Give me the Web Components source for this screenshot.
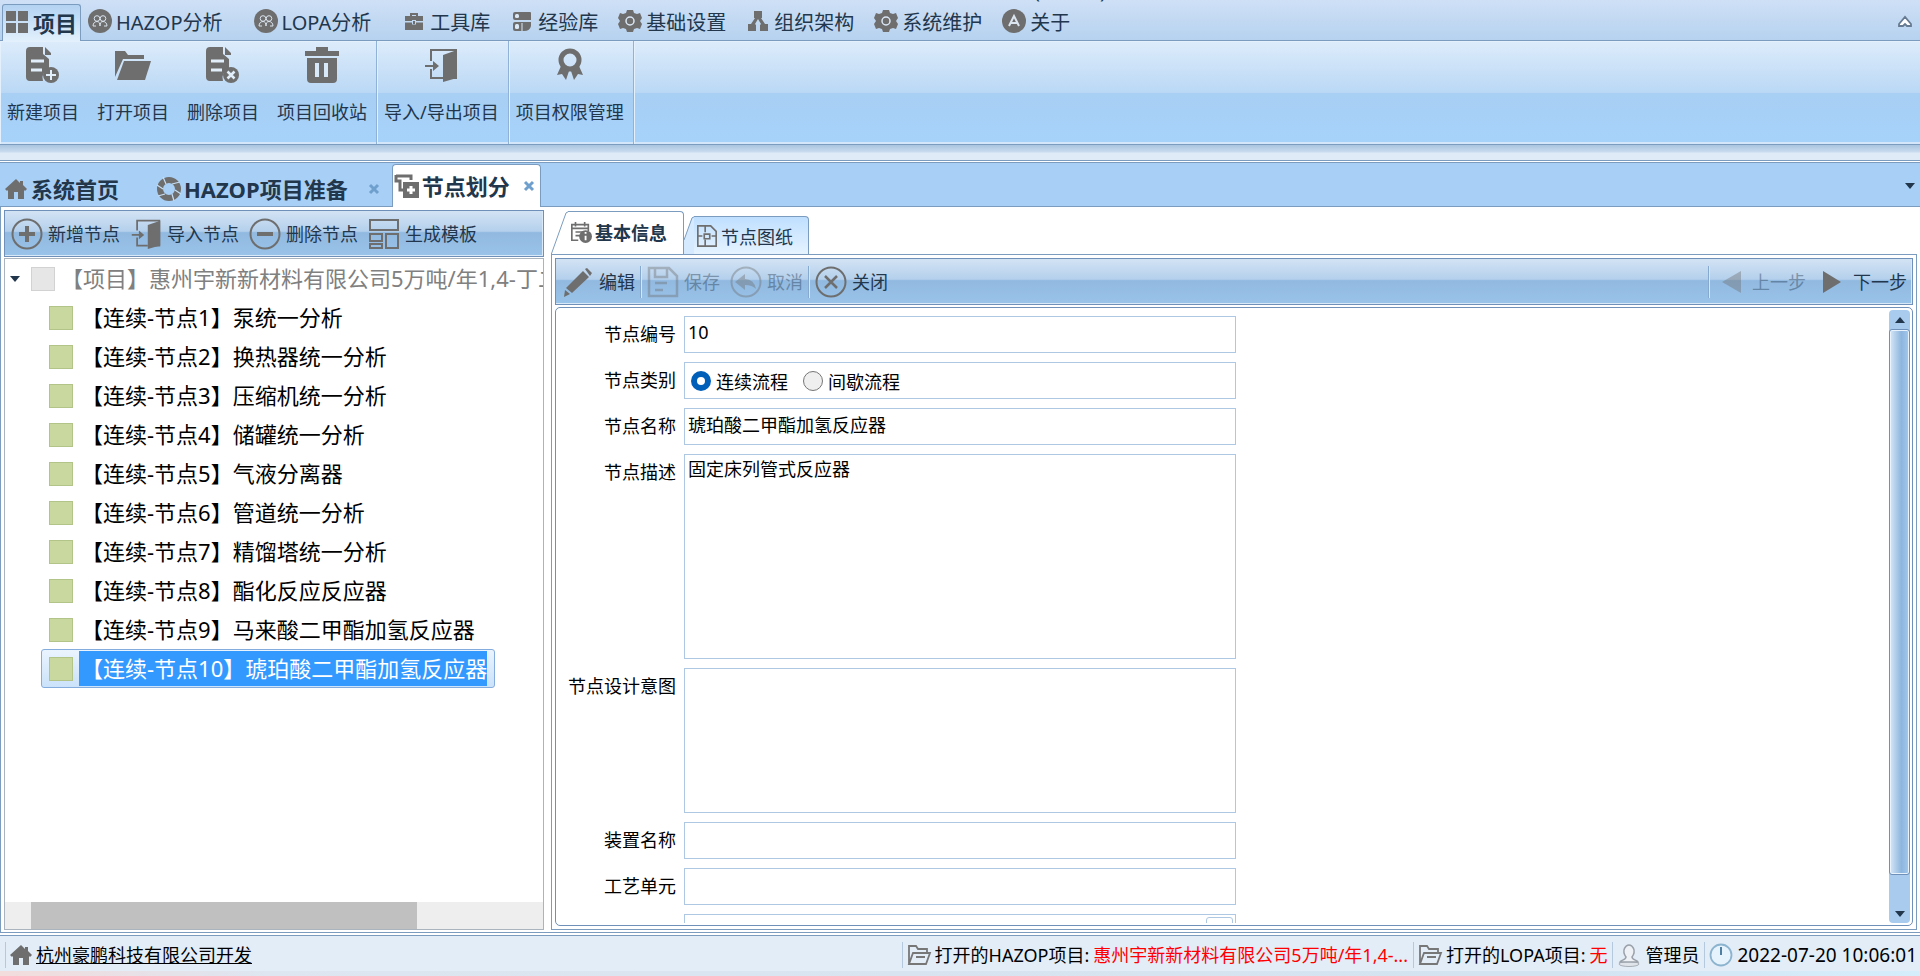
<!DOCTYPE html>
<html lang="zh-CN">
<head>
<meta charset="utf-8">
<title>节点划分</title>
<style>
  html, body {
    height: 100%;
    margin: 0;
  }
  body {
    --line: #7b9cbf;
    --ink: #22364c;
    --icon: #6e6e6e;
    --bar: linear-gradient(#d3e3f4 0, #b4d0ec 45%, #92bae1 48%, #9ac3ea 100%);
    font-family: "Noto Sans", "Noto Sans CJK SC", sans-serif;
    font-size: 18px;
    color: #000;
    background: #fff;
    overflow: hidden;
  }
</style>
</head>
<body>
<hazop-app></hazop-app>

<script>
const ICONS = {
  grid: '<path d="M1 1h10v10H1zM13 1h10v10H13zM1 13h10v10H1zM13 13h10v10H13z" fill="currentColor"/>',
  people: '<circle cx="12" cy="12" r="12" fill="currentColor"/><g fill="none" stroke="#dbe5ef" stroke-width="1"><circle cx="9" cy="9.500" r="2.800"/><circle cx="15" cy="9.500" r="2.800"/><path d="M5 17c0-3 2-4.500 4-4.500s3 1.500 3 4.500M12 17c0-3 1-4.500 3-4.500s4 1.500 4 4.500M5 17h3M16 17h3"/></g>',
  toolbox: '<path d="M3 7h5V4h8v3h5v5h-7v-1h-4v1H3zM10 7h4V6h-4zM3 13.500h7v2h4v-2h7V21H3z" fill="currentColor"/><path d="M11 12h2v3h-2z" fill="currentColor"/>',
  library: '<path d="M5 3h15a1 1 0 0 1 1 1v7H5a2 2 0 0 1-2-2V5a2 2 0 0 1 2-2zM5 13h16v4q-1 5-7 5H5a2 2 0 0 1-2-2v-5a2 2 0 0 1 2-2z" fill="currentColor"/><rect x="5" y="5" width="4" height="4" rx="1.500" fill="#dbe8f6"/><rect x="5" y="15" width="4" height="5" rx="1.500" fill="#dbe8f6"/><path d="M12 14v8" stroke="#dbe8f6"/>',
  gear: '<path d="M9 1h6l1 3 3 1 3-1 2 5-2 3 2 3-2 5-3-1-3 1-1 3H9l-1-3-3-1-3 1-2-5 2-3-2-3 2-5 3 1 3-1z" fill="currentColor"/><circle cx="12" cy="12" r="4" fill="none" stroke="#dbe8f6" stroke-width="1.500"/>',
  org: '<path d="M8 2h8v7h-1l4 6h3v7h-8v-6l1-1-3-5-3 5 1 1v6H2v-7h3l4-6H8z" fill="currentColor"/>',
  about: '<circle cx="12" cy="12" r="12" fill="currentColor"/><path d="M7 17l5-10 5 10M9 14h6" fill="none" stroke="#dbe5ef" stroke-width="2"/>',
  docAdd: '<path d="M5 0h13v7l6 5v10a9 9 0 0 0-6 12H5a4 4 0 0 1-4-4V4a4 4 0 0 1 4-4zM20 0l6 6v2h-6z" fill="currentColor"/><path d="M6 14h13M6 23h11" stroke="#e2effb" stroke-width="3"/><circle cx="26" cy="28" r="8" fill="currentColor"/><path d="M26 23v10M21 28h10" stroke="#e2effb" stroke-width="2"/>',
  docDel: '<path d="M5 0h13v7l6 5v10a9 9 0 0 0-6 12H5a4 4 0 0 1-4-4V4a4 4 0 0 1 4-4zM20 0l6 6v2h-6z" fill="currentColor"/><path d="M6 14h13M6 23h11" stroke="#e2effb" stroke-width="3"/><circle cx="26" cy="28" r="8" fill="currentColor"/><path d="M22.500 24.500l7 7M29.500 24.500l-7 7" stroke="#e2effb" stroke-width="2.500"/>',
  folder: '<path d="M0 4h10l3 4h16v4H8L0 30z" fill="currentColor"/><path d="M9 14h27l-6 19H2z" fill="currentColor"/>',
  trash: '<path d="M12 0h12v4h11v5H1V4h11zM3 11h30v21a4 4 0 0 1-4 4H7a4 4 0 0 1-4-4z" fill="currentColor"/><path d="M13 16v14M22 16v14" stroke="#d8e9f9" stroke-width="4"/>',
  door: '<path d="M8 14V3h25v28h-8M8 22v9h12" fill="none" stroke="currentColor" stroke-width="2"/><path d="M20 8l14-5v28l-14 4zM10 14l6 5-6 5v-4H2v-2h8z" fill="currentColor"/>',
  medal: '<circle cx="18" cy="13" r="9" fill="none" stroke="currentColor" stroke-width="5"/><path d="M9 19L5 28l5-1 4 6 3-9zM27 19l4 9-5-1-4 6-3-9z" fill="currentColor"/>',
  home: '<path d="M12 2L1 12l2 2 1-1v9h6v-7h4v7h6v-9l1 1 2-2-4-4V4h-3v2z" fill="currentColor"/>',
  shutter: '<circle cx="12" cy="12" r="9" fill="none" stroke="currentColor" stroke-width="6"/><path d="M6 0l3 7M23 5l-8 2M24 17l-6-4M17 24l-2-7M1 19l7-2M0 8l6 4" stroke="#c7dff5" stroke-width="1.200"/>',
  split: '<path d="M1 1v6h4v9h4M1 2h15v4" fill="none" stroke="currentColor" stroke-width="3"/><path d="M8 8h16v16H8z" fill="currentColor"/><path d="M16 12v8M12 16h8" stroke="#fff" stroke-width="3"/>',
  plus: '<circle cx="16" cy="16" r="14.500" fill="none" stroke="currentColor" stroke-width="2"/><path d="M16 8v16M8 16h16" stroke="currentColor" stroke-width="4"/>',
  minus: '<circle cx="16" cy="16" r="14.500" fill="none" stroke="currentColor" stroke-width="2"/><path d="M8 16h16" stroke="currentColor" stroke-width="4"/>',
  template: '<path d="M2 2h28v10H2zM2 16h12v7H2zM18 16h12v14H18zM2 26h12v4H2z" fill="none" stroke="currentColor" stroke-width="2"/>',
  info: '<path d="M9 21H2V4h18v7M2 8h18M6 1v5M16 1v5M6 12h9M6 16h5" fill="none" stroke="currentColor" stroke-width="1.800"/><circle cx="17" cy="17" r="7" fill="currentColor"/><path d="M17 16v5M17 12v2" stroke="#fff" stroke-width="2"/>',
  drawing: '<path d="M2 1h14l6 6v16H2zM10 1v7M10 16v7M2 12h5M17 12h5M9 10h6v5H9z" fill="none" stroke="currentColor" stroke-width="1.800"/>',
  pencil: '<path d="M23 3l2-1 5 5-2 3zM21 5l6 6L10 27l-6-5zM3 24l5 4-6 3z" fill="currentColor"/>',
  save: '<path d="M2 2h20l8 8v20H2zM8 2v9h12V2M8 17h12M8 24h8" fill="none" stroke="currentColor" stroke-width="2.500"/>',
  undo: '<circle cx="16" cy="16" r="14.500" fill="none" stroke="currentColor" stroke-width="2"/><path d="M15 8v5q9 0 11 10-4-4-11-4v5l-10-8z" fill="currentColor"/>',
  cross: '<circle cx="16" cy="16" r="14.500" fill="none" stroke="currentColor" stroke-width="2"/><path d="M10 10l12 12M22 10L10 22" stroke="currentColor" stroke-width="2.500"/>',
  prev: '<path d="M26 5v22L7 16z" fill="currentColor"/>',
  next: '<path d="M7 5v22l18-11z" fill="currentColor"/>',
  close: '<path d="M2 2l8 8M10 2l-8 8" stroke="#6f9fcc" stroke-width="3"/>',
  down: '<path d="M1 3h10L6 9z" fill="#22364c"/>',
  up: '<path d="M1 9h10L6 3z" fill="#22364c"/>',
  collapse: '<path d="M1 9l6-7 6 7v2H9L7 9l-2 2H1z" fill="#fff" stroke="#667b92" stroke-width="1.800"/>',
  folderOpen: '<path d="M2 21V3h7l2 3h9v4M2 21l4-11h17l-4 11zM9 14h9" fill="none" stroke="#777" stroke-width="1.800"/>',
  user: '<ellipse cx="12" cy="21" rx="10" ry="2.500" fill="#dfe4ea" stroke="#a6adb5"/><path d="M9 14c-5-7 0-12 3-12s8 5 3 12c0 3 5 3 6 5H3c1-2 6-2 6-5z" fill="#eef2f6" stroke="#9aa1a9" stroke-width="1.500"/>',
  clock: '<circle cx="12" cy="12" r="10.500" fill="#e6f3fc" stroke="#8cb4cf" stroke-width="1.800"/><path d="M12 4v8" stroke="#4f7fa3" stroke-width="2"/>'
};

class UiIcon extends HTMLElement {
  constructor() {
    super();
    this.attachShadow({ mode: 'open' });
  }
  connectedCallback() {
    const size = Number(this.getAttribute('size')) || 24;
    const box = Number(this.getAttribute('box')) || size;
    this.shadowRoot.innerHTML = `
    <style>
      :host {
        display: block;
        flex: none;
        color: var(--icon);
      }
      svg {
        display: block;
        overflow: visible;
      }
    </style>
    <svg width="${size}" height="${size}" viewBox="0 0 ${box} ${box}" aria-hidden="true">${ICONS[this.getAttribute('name')]}</svg>
    `;
  }
}
customElements.define('ui-icon', UiIcon);

class MenuTab extends HTMLElement {
  constructor() {
    super();
    this.attachShadow({ mode: 'open' });
  }
  connectedCallback() {
    this.shadowRoot.innerHTML = `
    <style>
      :host {
        display: block;
        margin-right: 20px;
      }
      :host([wide]) {
        margin-right: 31px;
      }
      button {
        display: flex;
        align-items: center;
        gap: 4px;
        height: 36px;
        padding: 0 0 2px;
        border: 0;
        background: none;
        font: inherit;
        font-size: 20px;
        color: var(--ink);
        white-space: nowrap;
      }
      :host([active]) {
        margin: 0 7px -1px 2px;
      }
      :host([active]) button {
        font-size: 22px;
        font-weight: bold;
        height: 37px;
        padding: 0 3px 2px 2px;
        border: 1px solid var(--line);
        border-bottom: 0;
        border-radius: 3px 3px 0 0;
        background: linear-gradient(#b3d2f2, #e2f0fc);
      }
    </style>
    <button type="button"><ui-icon name="${this.getAttribute('icon')}"></ui-icon><slot></slot></button>
    `;
  }
}
customElements.define('menu-tab', MenuTab);

class RibbonButton extends HTMLElement {
  constructor() {
    super();
    this.attachShadow({ mode: 'open' });
  }
  connectedCallback() {
    this.shadowRoot.innerHTML = `
    <style>
      :host {
        display: block;
      }
      button {
        display: flex;
        flex-direction: column;
        align-items: center;
        gap: 16px;
        padding: 6px 0 0;
        border: 0;
        background: none;
        font: inherit;
        line-height: 26px;
        color: var(--ink);
        white-space: nowrap;
      }
    </style>
    <button type="button">
      <ui-icon name="${this.getAttribute('icon')}" size="36"></ui-icon>
      <slot></slot>
    </button>
    `;
  }
}
customElements.define('ribbon-button', RibbonButton);

class RibbonGroup extends HTMLElement {
  constructor() {
    super();
    this.attachShadow({ mode: 'open' });
    this.shadowRoot.innerHTML = `
    <style>
      :host {
        display: flex;
        gap: 18px;
        padding: 0 9px 0 7px;
        border-right: 1px solid #8fb2d6;
        box-shadow: 1px 0 0 #e4f1fd;
      }
    </style>
    <slot></slot>
    `;
  }
}
customElements.define('ribbon-group', RibbonGroup);

class AppRibbon extends HTMLElement {
  constructor() {
    super();
    this.attachShadow({ mode: 'open' });
    this.shadowRoot.innerHTML = `
    <style>
      :host {
        display: block;
        flex: none;
        background: linear-gradient(#cfe0f6, #b6d2ef 40px);
      }
      .title {
        display: flex;
        align-items: flex-end;
        justify-content: center;
        gap: 120px;
        height: 2px;
        margin-right: 100px;
        overflow: hidden;
        font-size: 20px;
        line-height: 22px;
        color: var(--ink);
      }
      nav {
        display: flex;
        align-items: center;
        padding-top: 2px;
        height: 36px;
      }
      .spacer {
        flex: 1;
      }
      .collapse {
        padding: 0;
        margin-right: 8px;
        border: 0;
        background: none;
      }
      .body {
        display: flex;
        height: 103px;
        border-top: 1px solid var(--line);
        border-bottom: 1px solid var(--line);
        box-shadow: inset 1px 1px 0 #e4f1fd, inset 0 -2px 0 #d4e7fa;
        background: linear-gradient(#ddecfb 0, #bad8f5 50%, #a8cff4 51%, #a6d2fa 100%);
      }
      .shade {
        height: 15px;
        background: linear-gradient(#a9c4e0 0, #c9dcef 7px, #dfebf7 8px);
      }
    </style>
    <div class="title"><span>欢迎使用风险分析软件</span><span>(学习版)</span></div>
    <nav>
      <menu-tab icon="grid" active>项目</menu-tab>
      <menu-tab icon="people" wide>HAZOP分析</menu-tab>
      <menu-tab icon="people" wide>LOPA分析</menu-tab>
      <menu-tab icon="toolbox">工具库</menu-tab>
      <menu-tab icon="library">经验库</menu-tab>
      <menu-tab icon="gear">基础设置</menu-tab>
      <menu-tab icon="org">组织架构</menu-tab>
      <menu-tab icon="gear">系统维护</menu-tab>
      <menu-tab icon="about">关于</menu-tab>
      <div class="spacer"></div>
      <button class="collapse" type="button" aria-label="折叠"><ui-icon name="collapse" size="14"></ui-icon></button>
    </nav>
    <div class="body">
      <ribbon-group>
        <ribbon-button icon="docAdd">新建项目</ribbon-button>
        <ribbon-button icon="folder">打开项目</ribbon-button>
        <ribbon-button icon="docDel">删除项目</ribbon-button>
        <ribbon-button icon="trash">项目回收站</ribbon-button>
      </ribbon-group>
      <ribbon-group>
        <ribbon-button icon="door">导入/导出项目</ribbon-button>
      </ribbon-group>
      <ribbon-group>
        <ribbon-button icon="medal">项目权限管理</ribbon-button>
      </ribbon-group>
    </div>
    <div class="shade"></div>
    `;
  }
}
customElements.define('app-ribbon', AppRibbon);

class DocTab extends HTMLElement {
  constructor() {
    super();
    this.attachShadow({ mode: 'open' });
  }
  connectedCallback() {
    const closable = this.hasAttribute('closable');
    this.shadowRoot.innerHTML = `
    <style>
      :host {
        display: flex;
        align-items: center;
        gap: 20px;
        height: 34px;
        padding: 0 12px 0 4px;
      }
      :host([active]) {
        gap: 13px;
        height: 42px;
        padding: 0 5px 0 2px;
        margin-bottom: -1px;
        border: 1px solid var(--line);
        border-bottom: 0;
        border-radius: 4px 4px 0 0;
        background: #fff;
      }
      button {
        display: flex;
        align-items: center;
        gap: 3px;
        padding: 0;
        border: 0;
        background: none;
        font: inherit;
        font-size: 22px;
        font-weight: bold;
        line-height: 32px;
        color: var(--ink);
        white-space: nowrap;
      }
    </style>
    <button type="button"><ui-icon name="${this.getAttribute('icon')}"></ui-icon><slot></slot></button>
    ${closable ? '<button type="button" aria-label="关闭"><ui-icon name="close" size="12"></ui-icon></button>' : ''}
    `;
  }
}
customElements.define('doc-tab', DocTab);

class ToolButton extends HTMLElement {
  constructor() {
    super();
    this.attachShadow({ mode: 'open' });
  }
  connectedCallback() {
    this.shadowRoot.innerHTML = `
    <style>
      :host {
        display: block;
      }
      button {
        display: flex;
        align-items: center;
        gap: 5px;
        padding: 0;
        border: 0;
        background: none;
        font: inherit;
        line-height: 26px;
        color: var(--ink);
        white-space: nowrap;
      }
      button:disabled {
        opacity: 0.4;
      }
    </style>
    <button type="button" ${this.hasAttribute('disabled') ? 'disabled' : ''}>
      <ui-icon name="${this.getAttribute('icon')}" size="32" box="${this.getAttribute('box') || 32}"></ui-icon>
      <slot></slot>
    </button>
    `;
  }
}
customElements.define('tool-button', ToolButton);

class ToolBar extends HTMLElement {
  constructor() {
    super();
    this.attachShadow({ mode: 'open' });
    this.shadowRoot.innerHTML = `
    <style>
      :host {
        display: flex;
        flex: none;
        align-items: center;
        gap: 10px;
        height: 45px;
        padding: 0 5px 0 6px;
        border: 1px solid #6f90b8;
        box-shadow: inset -1px -1px 0 #d9e9f8;
        background: var(--bar);
      }
      ::slotted(hr) {
        width: 1px;
        height: 32px;
        margin: 0 -5px 0 -5px;
        border: 0;
        border-left: 1px solid #86a9cf;
        background: #d5e6f7;
      }
      ::slotted(hr.push) {
        margin-left: auto;
      }
    </style>
    <slot></slot>
    `;
  }
}
customElements.define('tool-bar', ToolBar);

class TreeItem extends HTMLElement {
  constructor() {
    super();
    this.attachShadow({ mode: 'open' });
    this.shadowRoot.innerHTML = `
    <style>
      :host {
        display: flex;
        flex: none;
        align-items: center;
        align-self: flex-start;
        gap: 6px;
        height: 37px;
        margin-left: 36px;
        padding: 0 7px;
        border: 1px solid transparent;
        border-radius: 3px;
        font-size: 22px;
        line-height: 35px;
        white-space: nowrap;
      }
      .box {
        flex: none;
        width: 22px;
        height: 22px;
        border: 1px solid #b3c489;
        background: #c8d89e;
      }
      .text {
        padding-left: 2px;
      }
      :host([root]) {
        gap: 4px;
        margin-left: 0;
        padding-left: 3px;
        color: #808080;
      }
      .arrow {
        display: none;
        margin-right: 6px;
        padding: 0;
        border: 0;
        background: none;
      }
      :host([root]) .arrow {
        display: block;
      }
      :host([root]) .box {
        border-color: #d2d2d2;
        background: #e6e6e6;
      }
      :host([selected]) {
        border-color: #84acdd;
        background: linear-gradient(#eaf4fe, #cbe2fa);
      }
      :host([selected]) .text {
        color: #fff;
        background: #3399ff;
      }
    </style>
    <button class="arrow" type="button" aria-label="展开"><ui-icon name="down" size="12"></ui-icon></button>
    <span class="box"></span>
    <span class="text"><slot></slot></span>
    `;
  }
}
customElements.define('tree-item', TreeItem);

class NodeTree extends HTMLElement {
  constructor() {
    super();
    this.attachShadow({ mode: 'open' });
    this.shadowRoot.innerHTML = `
    <style>
      :host {
        display: flex;
        flex-direction: column;
        flex: none;
        width: 540px;
        min-height: 0;
      }
      .tree {
        display: flex;
        flex-direction: column;
        flex: 1;
        min-height: 0;
        margin-top: 1px;
        border: 1px solid #aab4be;
        overflow: hidden;
      }
      .items {
        display: flex;
        flex-direction: column;
        flex: 1;
        min-height: 0;
        overflow: hidden;
      }
      .scroll {
        flex: none;
        height: 27px;
        padding-left: 26px;
        background: #eee;
      }
      .thumb {
        width: 386px;
        height: 100%;
        background: #c0c0c0;
      }
    </style>
    <tool-bar>
      <tool-button icon="plus">新增节点</tool-button>
      <tool-button icon="door" box="36">导入节点</tool-button>
      <tool-button icon="minus">删除节点</tool-button>
      <tool-button icon="template">生成模板</tool-button>
    </tool-bar>
    <div class="tree">
      <div class="items"><slot></slot></div>
      <div class="scroll"><div class="thumb"></div></div>
    </div>
    `;
  }
}
customElements.define('node-tree', NodeTree);

class PageTab extends HTMLElement {
  constructor() {
    super();
    this.attachShadow({ mode: 'open' });
  }
  connectedCallback() {
    const active = this.hasAttribute('active');
    this.shadowRoot.innerHTML = `
    <style>
      :host {
        display: flex;
        height: 38px;
      }
      :host([active]) {
        height: 44px;
        margin-bottom: -1px;
      }
      svg {
        display: block;
        flex: none;
        height: 100%;
      }
      button {
        display: flex;
        align-items: center;
        gap: 3px;
        padding: 0 15px 0 2px;
        border: 1px solid var(--line);
        border-width: 1px 1px 0 0;
        border-radius: 0 4px 0 0;
        background: linear-gradient(#bfdfff, #e6f3ff);
        font: inherit;
        color: var(--ink);
        white-space: nowrap;
      }
      :host([active]) button {
        padding: 0 16px 3px 2px;
        font-weight: bold;
        background: #fff;
      }
    </style>
    ${active
      ? '<svg width="17" viewBox="0 0 17 44"><path d="M0 44L17 0v44z" fill="#fff"/><path d="M0 44L15 2q1-1 2-1" fill="none" stroke="#7b9cbf"/></svg>'
      : '<svg width="10" viewBox="0 0 10 38"><path d="M0 38V24L8 1h2v37z" fill="#d5eaff"/><path d="M0 24L8 2q1-1 2-1" fill="none" stroke="#7b9cbf"/></svg>'}
    <button type="button"><ui-icon name="${this.getAttribute('icon')}" size="22" box="24"></ui-icon><slot></slot></button>
    `;
  }
}
customElements.define('page-tab', PageTab);

class FormField extends HTMLElement {
  constructor() {
    super();
    this.attachShadow({ mode: 'open' });
  }
  connectedCallback() {
    const type = this.getAttribute('type') || 'text';
    const label = this.getAttribute('label') || '';
    const value = this.getAttribute('value') || '';
    let control = `<input id="control" class="control" type="text" value="${value}">`;
    if (type === 'area') {
      control = `<textarea id="control" class="control">${value}</textarea>`;
    } else if (type === 'radio') {
      const options = this.getAttribute('options').split(',');
      control = `<div class="control radios" role="radiogroup" aria-labelledby="name">
        ${options.map(o => `<label><input type="radio" name="option" ${o === value ? 'checked' : ''}>${o}</label>`).join('')}
      </div>`;
    } else if (type === 'select') {
      control = '<div class="control picker"><select id="control" aria-label="类型"></select><span class="drop"></span></div>';
    }
    const tag = type === 'radio' ? 'span' : 'label';
    this.shadowRoot.innerHTML = `
    <style>
      :host {
        display: flex;
        flex: none;
        gap: 8px;
      }
      .name {
        flex: none;
        width: 118px;
        line-height: 37px;
        text-align: right;
      }
      .control {
        box-sizing: border-box;
        width: 552px;
        height: 37px;
        margin: 0;
        padding: 0 3px 6px;
        border: 1px solid #aec8e4;
        background: #fff;
        font: inherit;
        color: #000;
      }
      textarea.control {
        height: var(--rows);
        padding-top: 1px;
        line-height: 26px;
        resize: none;
      }
      .radios {
        display: flex;
        align-items: center;
        gap: 15px;
        padding: 0 6px;
      }
      .radios label {
        display: flex;
        align-items: center;
        gap: 5px;
      }
      .radios input {
        appearance: none;
        width: 20px;
        height: 20px;
        margin: 0;
        border: 1px solid #767676;
        border-radius: 50%;
        background: #efefef;
      }
      .radios input:checked {
        border: 6px solid #005fb8;
        background: #fff;
      }
      .picker {
        display: flex;
        padding: 0;
      }
      select {
        appearance: none;
        flex: 1;
        border: 0;
        background: none;
      }
      .drop {
        width: 25px;
        margin: 2px;
        border: 1px solid #aec8e4;
        border-radius: 3px;
      }
    </style>
    <${tag} class="name" id="name" ${type === 'radio' ? '' : 'for="control"'}>${label}</${tag}>
    ${control}
    `;
  }
}
customElements.define('form-field', FormField);

class DetailPane extends HTMLElement {
  constructor() {
    super();
    this.attachShadow({ mode: 'open' });
    this.shadowRoot.innerHTML = `
    <style>
      :host {
        display: flex;
        flex-direction: column;
        flex: 1;
        min-width: 0;
      }
      .tabs {
        display: flex;
        flex: none;
        align-items: flex-end;
        height: 44px;
      }
      .frame {
        display: flex;
        flex-direction: column;
        flex: 1;
        gap: 2px;
        min-height: 0;
        padding: 3px;
        border: 1px solid var(--line);
      }
      .panel {
        display: flex;
        flex: 1;
        justify-content: space-between;
        min-height: 0;
        padding: 2px;
        border: 1px solid #6f90b8;
        border-radius: 5px;
      }
      form {
        display: flex;
        flex-direction: column;
        gap: 9px;
        min-height: 0;
        padding-top: 6px;
        overflow: hidden;
      }
      .scroll {
        display: flex;
        flex-direction: column;
        width: 21px;
        border-radius: 4px;
        background: #a8cbee;
      }
      .scroll button {
        display: flex;
        justify-content: center;
        align-items: center;
        height: 19px;
        padding: 0;
        border: 0;
        background: none;
      }
      .track {
        flex: 1;
        padding-bottom: 29px;
      }
      .thumb {
        box-sizing: border-box;
        height: 100%;
        border: 1px solid #6f90b8;
        border-radius: 3px;
        box-shadow: inset 0 0 0 1px #e8f3fd;
        background: linear-gradient(to right, #d6e7f7, #8db5de 60%, #a5c9ee);
      }
    </style>
    <div class="tabs">
      <page-tab icon="info" active>基本信息</page-tab>
      <page-tab icon="drawing">节点图纸</page-tab>
    </div>
    <div class="frame">
      <tool-bar>
        <tool-button icon="pencil">编辑</tool-button>
        <hr>
        <tool-button icon="save" disabled>保存</tool-button>
        <tool-button icon="undo" disabled>取消</tool-button>
        <hr>
        <tool-button icon="cross">关闭</tool-button>
        <hr class="push">
        <tool-button icon="prev" disabled>上一步</tool-button>
        <tool-button icon="next">下一步</tool-button>
      </tool-bar>
      <div class="panel">
        <form>
          <form-field label="节点编号" value="10"></form-field>
          <form-field label="节点类别" type="radio" options="连续流程,间歇流程" value="连续流程"></form-field>
          <form-field label="节点名称" value="琥珀酸二甲酯加氢反应器"></form-field>
          <form-field label="节点描述" type="area" value="固定床列管式反应器" style="--rows: 205px"></form-field>
          <form-field label="节点设计意图" type="area" style="--rows: 145px"></form-field>
          <form-field label="装置名称"></form-field>
          <form-field label="工艺单元"></form-field>
          <form-field type="select"></form-field>
        </form>
        <div class="scroll">
          <button type="button" aria-label="向上"><ui-icon name="up" size="12"></ui-icon></button>
          <div class="track"><div class="thumb"></div></div>
          <button type="button" aria-label="向下"><ui-icon name="down" size="12"></ui-icon></button>
        </div>
      </div>
    </div>
    `;
  }
}
customElements.define('detail-pane', DetailPane);

class StatusBar extends HTMLElement {
  constructor() {
    super();
    this.attachShadow({ mode: 'open' });
    this.shadowRoot.innerHTML = `
    <style>
      :host {
        display: block;
        flex: none;
        border-top: 1px solid var(--line);
        box-shadow: inset 0 2px 0 #fff;
        background: #e3edf8;
      }
      .bar {
        display: flex;
        align-items: center;
        justify-content: space-between;
        height: 33px;
        margin-top: 2px;
        padding: 2px 3px 0 5px;
        border-top: 1px solid var(--line);
        line-height: 26px;
        white-space: nowrap;
      }
      .side, .cell {
        display: flex;
        align-items: center;
      }
      .cell {
        gap: 4px;
        padding: 0 5px 0 4px;
        border-left: 1px solid #b5c9de;
      }
      .cell.site {
        gap: 3px;
        padding-left: 3px;
      }
      .cell:last-child {
        padding-right: 0;
      }
      a {
        color: #000;
        text-decoration: underline;
      }
      b {
        font-weight: normal;
        color: #f00;
      }
      time {
        font-size: 19px;
      }
      .edge {
        height: 5px;
        background: linear-gradient(to right, #f3dcdc, #dde6f1 14%, #d3e3f0 80%, #d5eefc);
      }
    </style>
    <div class="bar">
      <div class="cell site"><ui-icon name="home"></ui-icon><a href="#">杭州豪鹏科技有限公司开发</a></div>
      <div class="side">
        <div class="cell"><ui-icon name="folderOpen"></ui-icon><span>打开的HAZOP项目:</span><b>惠州宇新新材料有限公司5万吨/年1,4-...</b></div>
        <div class="cell"><ui-icon name="folderOpen"></ui-icon><span>打开的LOPA项目:</span><b>无</b></div>
        <div class="cell"><ui-icon name="user"></ui-icon><span>管理员</span></div>
        <div class="cell"><ui-icon name="clock"></ui-icon><time datetime="2022-07-20T10:06:01">2022-07-20 10:06:01</time></div>
      </div>
    </div>
    <div class="edge"></div>
    `;
  }
}
customElements.define('status-bar', StatusBar);

const NODES = [
  '泵统一分析',
  '换热器统一分析',
  '压缩机统一分析',
  '储罐统一分析',
  '气液分离器',
  '管道统一分析',
  '精馏塔统一分析',
  '酯化反应反应器',
  '马来酸二甲酯加氢反应器',
  '琥珀酸二甲酯加氢反应器'
];

class HazopApp extends HTMLElement {
  constructor() {
    super();
    this.attachShadow({ mode: 'open' });
    this.shadowRoot.innerHTML = `
    <style>
      :host {
        display: flex;
        flex-direction: column;
        height: 100vh;
      }
      .docs {
        display: flex;
        align-items: flex-end;
        flex: none;
        height: 43px;
        border-top: 1px solid var(--line);
        border-bottom: 1px solid var(--line);
        background: #a8cff5;
      }
      .rule {
        flex: none;
        height: 1px;
        border-top: 1px solid var(--line);
        background: #fff;
      }
      doc-tab:first-child {
        margin-right: 22px;
      }
      .more {
        margin: 0 4px 14px auto;
        padding: 0;
        border: 0;
        background: none;
      }
      main {
        display: flex;
        flex: 1;
        gap: 7px;
        min-height: 0;
        padding: 3px 3px 2px;
        border-left: 1px solid var(--line);
        background: #fff;
      }
    </style>
    <app-ribbon></app-ribbon>
    <div class="rule"></div>
    <div class="docs">
      <doc-tab icon="home">系统首页</doc-tab>
      <doc-tab icon="shutter" closable>HAZOP项目准备</doc-tab>
      <doc-tab icon="split" closable active>节点划分</doc-tab>
      <button class="more" type="button" aria-label="更多"><ui-icon name="down" size="12"></ui-icon></button>
    </div>
    <main>
      <node-tree>
        <tree-item root>【项目】惠州宇新新材料有限公司5万吨/年1,4-丁二醇</tree-item>
        ${NODES.map((name, i) => `<tree-item ${i === 9 ? 'selected' : ''}>【连续-节点${i + 1}】${name}</tree-item>`).join('')}
      </node-tree>
      <detail-pane></detail-pane>
    </main>
    <status-bar></status-bar>
    `;
  }
}
customElements.define('hazop-app', HazopApp);
</script>
</body>
</html>
